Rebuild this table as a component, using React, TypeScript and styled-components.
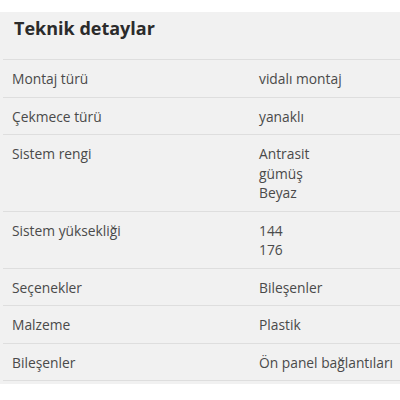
import React from "react";
import styled, { createGlobalStyle } from "styled-components";

const Global = createGlobalStyle`
  html, body { margin: 0; padding: 0; background: #ffffff; }
  body { font-family: "Open Sans", "Noto Sans", sans-serif; }
`;

const Panel = styled.section`
  margin-top: 12px;
  background: #f1f1f1;
  padding: 0 0 3px 3px;
  width: 400px;
  box-sizing: border-box;
`;

const Title = styled.h2`
  margin: 0;
  padding: 4px 0 0 11px;
  height: 48px;
  box-sizing: border-box;
  font-size: 18px;
  font-weight: 700;
  color: #2b2b2b;
  line-height: 24px;
  border-bottom: 1px solid #dedede;
`;

const Row = styled.div`
  display: grid;
  grid-template-columns: 247px 1fr;
  padding: 9px 0 8px 9px;
  border-bottom: 1px solid #dedede;
  font-size: 13.8px;
  line-height: 19.5px;
  color: #4a4a4a;
`;

const Label = styled.div``;

const Values = styled.div`
  display: flex;
  flex-direction: column;
  white-space: nowrap;
`;

const rows: [string, string[]][] = [
  ["Montaj türü", ["vidalı montaj"]],
  ["Çekmece türü", ["yanaklı"]],
  ["Sistem rengi", ["Antrasit", "gümüş", "Beyaz"]],
  ["Sistem yüksekliği", ["144", "176"]],
  ["Seçenekler", ["Bileşenler"]],
  ["Malzeme", ["Plastik"]],
  ["Bileşenler", ["Ön panel bağlantıları"]],
];

export default function App() {
  return (
    <>
      <Global />
      <Panel>
        <Title>Teknik detaylar</Title>
        {rows.map(([label, values]) => (
          <Row key={label}>
            <Label>{label}</Label>
            <Values>
              {values.map((v) => (
                <span key={v}>{v}</span>
              ))}
            </Values>
          </Row>
        ))}
      </Panel>
    </>
  );
}
